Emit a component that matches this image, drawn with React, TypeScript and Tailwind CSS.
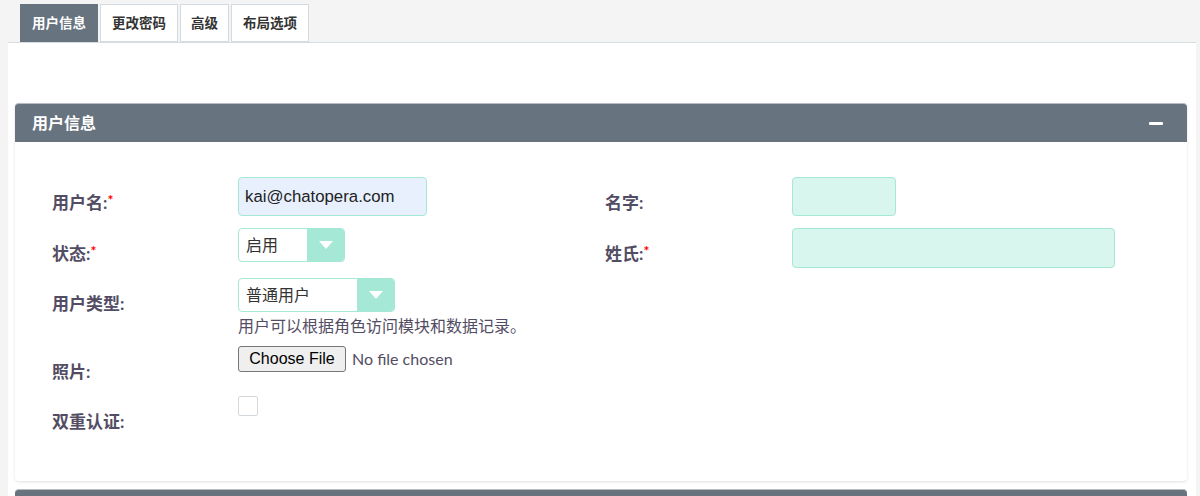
import React from "react";

const cjk = { fontFamily: '"Lato", "Noto Sans CJK SC", sans-serif' };

function Label({ text, req }: { text: string; req?: boolean }) {
  return (
    <div className="pt-[15px] text-[17px] font-bold leading-[22px] text-[#534d64]" style={cjk}>
      {text}:{req && <span className="align-top text-[14px] leading-[16px] text-[#ff0000]">*</span>}
    </div>
  );
}

function Select({ value, w }: { value: string; w: number }) {
  return (
    <div
      className="flex h-[34px] overflow-hidden rounded-[4px] border border-[#a5e8d6] bg-white"
      style={{ width: w }}
    >
      <div className="flex-1 pl-[7px] text-[16px] leading-[32px] text-[#333]" style={cjk}>
        {value}
      </div>
      <div className="flex w-[37px] items-center justify-center bg-[#a5e8d6]">
        <svg width="16" height="10" viewBox="0 0 16 10">
          <path d="M1 1 L15 1 L8 9 Z" fill="#fff" />
        </svg>
      </div>
    </div>
  );
}

export default function App() {
  const tabs = [
    { t: "用户信息", w: 78 },
    { t: "更改密码", w: 78 },
    { t: "高级", w: 49 },
    { t: "布局选项", w: 78 },
  ];
  return (
    <div className="h-[496px] w-[1200px] overflow-hidden bg-[#f4f4f4]" style={cjk}>
      <div className="flex h-[42px] items-end gap-[2px] pl-[20px] pt-[4px]">
        {tabs.map((t, i) => (
          <div
            key={t.t}
            style={{ width: t.w }}
            className={
              i === 0
                ? "flex h-[38px] items-center justify-center border border-[#67737e] bg-[#67737e] text-[13.5px] font-bold text-white"
                : "flex h-[38px] items-center justify-center border border-[#d3dbe0] bg-white text-[13.5px] font-bold text-[#333]"
            }
          >
            {t.t}
          </div>
        ))}
      </div>
      <div className="ml-[8px] w-[1188px] border-t border-[#d5dfe3] bg-white pb-[10px] pl-[7px] pr-[9px] pt-[60px]">
        <div className="rounded-[4px] bg-white shadow-[0_1px_3px_rgba(0,0,0,0.12)]">
          <div className="flex h-[39px] items-center justify-between rounded-t-[4px] border-t border-[#b6bcc2] bg-[#67737e] pl-[17px] pr-[24px]">
            <span className="text-[16px] font-bold text-white">用户信息</span>
            <div className="h-[3px] w-[14px] rounded-[1px] bg-white" />
          </div>
          <div className="h-[339px] pl-[37px] pt-[35px]">
            <div className="grid grid-cols-[186px_367px_187px_1fr]">
              {/* row 1 */}
              <div className="h-[51px]">
                <Label text="用户名" req />
              </div>
              <div>
                <div
                  className="h-[39px] w-[189px] rounded-[4px] border border-[#a5e8d6] bg-[#e8f0fe] pl-[6px] text-[16.8px] leading-[37px] text-[#222]"
                  style={{ fontFamily: '"Liberation Sans", Arial, sans-serif' }}
                >
                  kai@chatopera.com
                </div>
              </div>
              <div>
                <Label text="名字" />
              </div>
              <div>
                <div className="h-[39px] w-[104px] rounded-[4px] border border-[#a5e8d6] bg-[#d8f5ee]" />
              </div>
              {/* row 2 */}
              <div className="h-[50px]">
                <Label text="状态" req />
              </div>
              <div>
                <Select value="启用" w={107} />
              </div>
              <div>
                <Label text="姓氏" req />
              </div>
              <div>
                <div className="h-[40px] w-[323px] rounded-[4px] border border-[#a5e8d6] bg-[#d8f5ee]" />
              </div>
              {/* row 3 */}
              <div className="h-[68px]">
                <Label text="用户类型" />
              </div>
              <div className="col-span-3">
                <Select value="普通用户" w={157} />
                <div className="mt-[3px] text-[16px] leading-[22px] text-[#534d64]">
                  用户可以根据角色访问模块和数据记录。
                </div>
              </div>
              {/* row 4 */}
              <div className="h-[50px]">
                <Label text="照片" />
              </div>
              <div className="col-span-3 flex items-start">
                <div
                  className="flex h-[26px] w-[108px] items-center justify-center rounded-[3px] border border-[#767676] bg-[#efefef] text-[16px] text-[#000]"
                  style={{ fontFamily: '"Liberation Sans", Arial, sans-serif' }}
                >
                  Choose File
                </div>
                <span
                  className="ml-[6px] text-[16px] leading-[26px] text-[#534d64]"
                  style={{ fontFamily: "Lato, sans-serif" }}
                >
                  No file chosen
                </span>
              </div>
              {/* row 5 */}
              <div className="h-[50px]">
                <Label text="双重认证" />
              </div>
              <div className="col-span-3">
                <div className="h-[20px] w-[20px] rounded-[2px] border border-[#d4d9dd] bg-white" />
              </div>
            </div>
          </div>
        </div>
        <div className="mt-[8px] h-[39px] rounded-t-[4px] border-t border-[#b6bcc2] bg-[#67737e]" />
      </div>
    </div>
  );
}
